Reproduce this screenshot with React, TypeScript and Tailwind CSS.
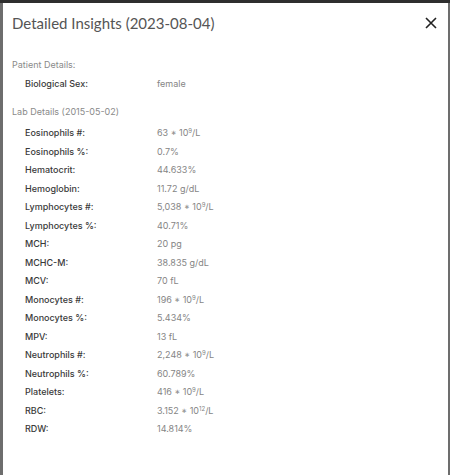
import React from "react";

type Row = { label: string; value: React.ReactNode };

const sup = (base: string, exp: string) => (
  <>
    {base} * 10<sup className="text-[6px]">{exp}</sup>/L
  </>
);

const labRows: Row[] = [
  { label: "Eosinophils #:", value: sup("63", "9") },
  { label: "Eosinophils %:", value: "0.7%" },
  { label: "Hematocrit:", value: "44.633%" },
  { label: "Hemoglobin:", value: "11.72 g/dL" },
  { label: "Lymphocytes #:", value: sup("5,038", "9") },
  { label: "Lymphocytes %:", value: "40.71%" },
  { label: "MCH:", value: "20 pg" },
  { label: "MCHC-M:", value: "38.835 g/dL" },
  { label: "MCV:", value: "70 fL" },
  { label: "Monocytes #:", value: sup("196", "9") },
  { label: "Monocytes %:", value: "5.434%" },
  { label: "MPV:", value: "13 fL" },
  { label: "Neutrophils #:", value: sup("2,248", "9") },
  { label: "Neutrophils %:", value: "60.789%" },
  { label: "Platelets:", value: sup("416", "9") },
  { label: "RBC:", value: sup("3.152", "12") },
  { label: "RDW:", value: "14.814%" },
];

function DetailRow({ label, value }: Row) {
  return (
    <div className="flex h-[18.5px] items-center text-[9px]">
      <span className="w-[145px] pl-[13px] font-medium text-[#3a3a3a]">{label}</span>
      <span className="text-[#858585]">{value}</span>
    </div>
  );
}

export default function App() {
  return (
    <div className="flex h-[475px] w-[450px] flex-col overflow-hidden bg-[#6d6d6d] font-['Inter',sans-serif]">
      <div className="h-[3px] bg-[#2e2e2e]" />
      <div className="ml-[3px] mr-[2px] flex-1 bg-white">
        <div className="flex h-[40px] items-center justify-between pl-[9px] pr-[11px]">
          <h2 className="font-['Lato',sans-serif] text-[15px] font-normal text-[#555]">Detailed Insights (2023-08-04)</h2>
          <svg width="12" height="12" viewBox="0 0 12 12" className="text-[#222]">
            <path d="M1 1 L11 11 M11 1 L1 11" stroke="currentColor" strokeWidth="1.6" />
          </svg>
        </div>
        <div className="pl-[9px] pt-[15px]">
          <p className="text-[9px] text-[#8a8a8a]">Patient Details:</p>
          <div className="mt-[3px]">
            <DetailRow label="Biological Sex:" value="female" />
          </div>
          <p className="mt-[12px] text-[9px] text-[#8a8a8a]">Lab Details (2015-05-02)</p>
          <div className="mt-[5px]">
            {labRows.map((row) => (
              <DetailRow key={row.label} {...row} />
            ))}
          </div>
        </div>
      </div>
    </div>
  );
}
